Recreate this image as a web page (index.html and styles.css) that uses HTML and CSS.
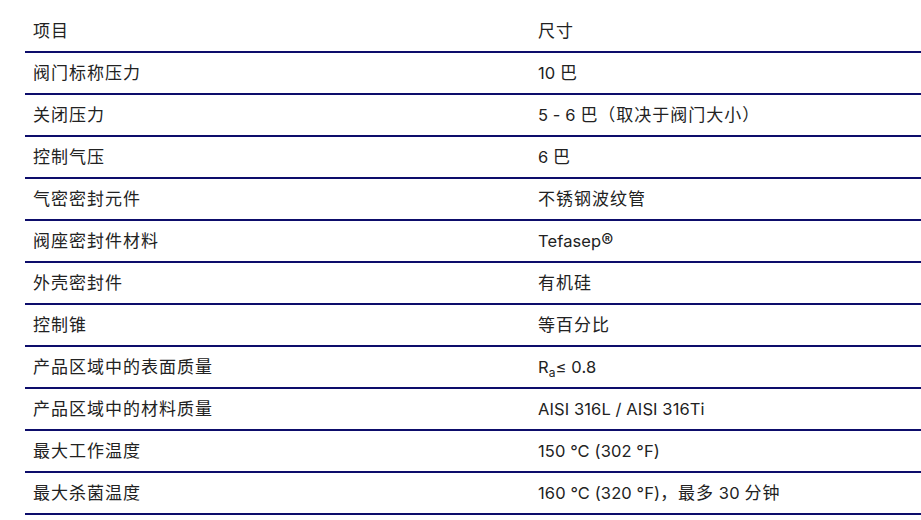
FILE: index.html
```html
<!DOCTYPE html>
<html lang="zh-CN">
<head>
<meta charset="utf-8">
<link rel="stylesheet" href="styles.css">
</head>
<body>
<div class="wrap">
<table class="spec">
<thead>
<tr><th class="c1"><span class="zh">项目</span></th><th class="c2"><span class="zh">尺寸</span></th></tr>
</thead>
<tbody>
<tr><td class="c1"><span class="zh">阀门标称压力</span></td><td class="c2">10 <span class="zh">巴</span></td></tr>
<tr><td class="c1"><span class="zh">关闭压力</span></td><td class="c2">5 - 6 <span class="zh">巴（取决于阀门大小）</span></td></tr>
<tr><td class="c1"><span class="zh">控制气压</span></td><td class="c2">6 <span class="zh">巴</span></td></tr>
<tr><td class="c1"><span class="zh">气密密封元件</span></td><td class="c2"><span class="zh">不锈钢波纹管</span></td></tr>
<tr><td class="c1"><span class="zh">阀座密封件材料</span></td><td class="c2">Tefasep<span class="reg">®</span></td></tr>
<tr><td class="c1"><span class="zh">外壳密封件</span></td><td class="c2"><span class="zh">有机硅</span></td></tr>
<tr><td class="c1"><span class="zh">控制锥</span></td><td class="c2"><span class="zh">等百分比</span></td></tr>
<tr><td class="c1"><span class="zh">产品区域中的表面质量</span></td><td class="c2">R<sub>a</sub>≤ 0.8</td></tr>
<tr><td class="c1"><span class="zh">产品区域中的材料质量</span></td><td class="c2">AISI 316L / AISI 316Ti</td></tr>
<tr><td class="c1"><span class="zh">最大工作温度</span></td><td class="c2">150 °C (302 °F)</td></tr>
<tr><td class="c1"><span class="zh">最大杀菌温度</span></td><td class="c2">160 °C (320 °F)<span class="zh">，最多</span> 30 <span class="zh">分钟</span></td></tr>
</tbody>
</table>
</div>
</body>
</html>
```
FILE: styles.css
```css
html, body {
  margin: 0;
  padding: 0;
  background: #ffffff;
}
body {
  font-family: Inter, "Noto Sans CJK SC", sans-serif;
  font-size: 16.5px;
  letter-spacing: 0.1px;
  color: #222222;
  overflow: hidden;
}
.wrap {
  padding: 11px 0 0 25px;
}
.spec {
  width: 896px;
  border-collapse: collapse;
  table-layout: fixed;
}
.spec th,
.spec td {
  height: 40px;
  padding: 0 8px;
  text-align: left;
  font-weight: 400;
  vertical-align: middle;
  border-bottom: 2px solid #0d0d6b;
  box-sizing: content-box;
  line-height: 20px;
  white-space: nowrap;
}
.spec .c1 {
  width: 489px;
}
.zh {
  font-size: 17px;
  letter-spacing: 1px;
}
.reg {
  font-size: 18px;
}
.spec sub {
  font-size: 12px;
  line-height: 0;
  vertical-align: -4px;
}
```
